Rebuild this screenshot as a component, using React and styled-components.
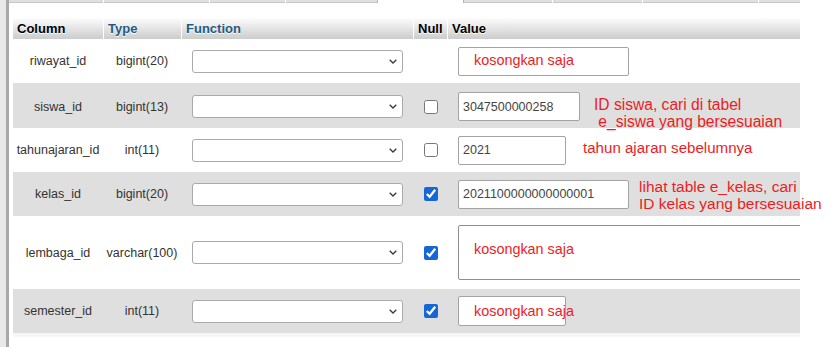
import React from "react";
import styled, { createGlobalStyle } from "styled-components";

const Global = createGlobalStyle`
  body {
    margin: 0;
    background: #fff;
    font-family: "Liberation Sans", Arial, sans-serif;
    color: #333;
  }
`;

const Page = styled.div`
  display: flex;
  height: 347px;
  overflow: hidden;
`;

const Rail = styled.div`
  width: 6px;
  flex: none;
  background: #e8e8e8;
  border-right: 3px solid #a8a8a8;
`;

const Main = styled.div`
  flex: 1;
  display: flex;
  flex-direction: column;
`;

const TabBar = styled.div`
  display: flex;
  gap: 1px;
  height: 3px;
  width: 791px;
`;

const Tab = styled.div`
  width: ${(p) => p.$w}px;
  flex: none;
  background: ${(p) => (p.$active ? "#fff" : "#e0e0e0")};
  box-shadow: ${(p) =>
    p.$active ? "-1px 0 0 #b5b5b5, 1px 0 0 #b5b5b5" : "inset 0 -1px 0 #c6c6c6"};
`;

const Table = styled.div`
  margin: 14px 0 0 4px;
  width: 787px;
`;

const cols = "90px 78px 232px 34px 353px";

const HeadRow = styled.div`
  display: grid;
  grid-template-columns: ${cols};
  height: 22px;
  background: linear-gradient(#fff, #ccc);
`;

const Th = styled.div`
  display: flex;
  align-items: center;
  padding-left: 4px;
  font-size: 13px;
  font-weight: bold;
  color: ${(p) => (p.$link ? "#235a81" : "#000")};
  text-shadow: 0 1px 0 #fff;
  border-left: ${(p) => (p.$first ? "none" : "1px solid #fff")};
`;

const Row = styled.div`
  display: grid;
  grid-template-columns: ${cols};
  height: ${(p) => p.$h}px;
  background: ${(p) => p.$bg || "#fff"};
`;

const Cell = styled.div`
  display: flex;
  align-items: center;
  justify-content: center;
  font-size: 12.5px;
  color: #333;
  white-space: nowrap;
`;

const ValueCell = styled.div`
  display: flex;
  align-items: center;
  padding-left: 11px;
  overflow: ${(p) => (p.$clip ? "hidden" : "visible")};
`;

const SelectWrap = styled.div`
  position: relative;
  width: 211px;
  height: 23px;
`;

const Select = styled.select`
  appearance: none;
  box-sizing: border-box;
  width: 100%;
  height: 100%;
  border: 1px solid #aaa;
  border-radius: 3px;
  background: #fff;
  font-family: inherit;
  font-size: 12.5px;
`;

const Chevron = styled.svg`
  position: absolute;
  right: 6px;
  top: 9px;
  pointer-events: none;
`;

const Check = styled.input.attrs({ type: "checkbox" })`
  width: 14px;
  height: 14px;
  margin: 0 0 0 1px;
  accent-color: #1666d6;
`;

const Field = styled.input.attrs({ readOnly: true })`
  box-sizing: border-box;
  width: ${(p) => p.$w}px;
  height: 29px;
  padding: 0 4px;
  border: 1px solid #a3a3a3;
  border-radius: 2px;
  font-family: inherit;
  font-size: 12.5px;
  color: #444;
  background: #fff;
  outline: none;
`;

const EmptyField = styled.div`
  box-sizing: border-box;
  flex: none;
  display: flex;
  width: ${(p) => p.$w}px;
  height: ${(p) => p.$h}px;
  align-items: ${(p) => (p.$top ? "flex-start" : "center")};
  padding: ${(p) => (p.$top ? 15 : 0)}px 0 ${(p) => p.$lift || 0}px 15px;
  border: 1px solid ${(p) => p.$border || "#a3a3a3"};
  border-radius: 2px;
  background: #fff;
  white-space: nowrap;
`;

const Red = styled.span`
  color: #ed1c24;
  font-size: ${(p) => p.$size || 14.4}px;
  line-height: ${(p) => p.$lh || 17}px;
  white-space: nowrap;
`;

const Note = styled.div`
  align-self: flex-start;
  margin-top: ${(p) => p.$top}px;
  margin-left: ${(p) => p.$gap}px;
  display: flex;
  flex-direction: column;
`;

const tabs = [94, 105, 75, 91, 85, 88, 89, 115, 41];

function FuncSelect() {
  return (
    <SelectWrap>
      <Select />
      <Chevron width="8" height="5" viewBox="0 0 8 5">
        <path d="M0.7 0.7 L4 4 L7.3 0.7" fill="none" stroke="#3a3a3a" strokeWidth="1.3" />
      </Chevron>
    </SelectWrap>
  );
}

function NullBox({ show, checked }) {
  return <Cell>{show && <Check defaultChecked={checked} />}</Cell>;
}

export default function App() {
  return (
    <Page>
      <Global />
      <Rail />
      <Main>
        <TabBar>
          {tabs.map((w, i) => (
            <Tab key={i} $w={w} $active={i === 4} />
          ))}
        </TabBar>
        <Table>
          <HeadRow>
            <Th $first>Column</Th>
            <Th $link>Type</Th>
            <Th $link>Function</Th>
            <Th>Null</Th>
            <Th>Value</Th>
          </HeadRow>

          <Row $h={44}>
            <Cell>riwayat_id</Cell>
            <Cell>bigint(20)</Cell>
            <Cell><FuncSelect /></Cell>
            <NullBox />
            <ValueCell>
              <EmptyField $w={171} $h={29} $lift={2}>
                <Red>kosongkan saja</Red>
              </EmptyField>
            </ValueCell>
          </Row>

          <Row $h={45} $bg="#dfdfdf">
            <Cell>siswa_id</Cell>
            <Cell>bigint(13)</Cell>
            <Cell><FuncSelect /></Cell>
            <NullBox show />
            <ValueCell>
              <Field $w={122} defaultValue="3047500000258" />
              <Note $top={14} $gap={14}>
                <Red $size={15.6} $lh={16.7}>ID siswa, cari di tabel</Red>
                <Red $size={15.6} $lh={16.7}>&nbsp;e_siswa yang bersesuaian</Red>
              </Note>
            </ValueCell>
          </Row>

          <Row $h={44}>
            <Cell>tahunajaran_id</Cell>
            <Cell>int(11)</Cell>
            <Cell><FuncSelect /></Cell>
            <NullBox show />
            <ValueCell>
              <Field $w={108} defaultValue="2021" />
              <Note $top={11} $gap={17}>
                <Red $size={15.1}>tahun ajaran sebelumnya</Red>
              </Note>
            </ValueCell>
          </Row>

          <Row $h={44} $bg="#dfdfdf">
            <Cell>kelas_id</Cell>
            <Cell>bigint(20)</Cell>
            <Cell><FuncSelect /></Cell>
            <NullBox show checked />
            <ValueCell>
              <Field $w={171} defaultValue="2021100000000000001" />
              <Note $top={6} $gap={10}>
                <Red $size={15.5} $lh={17.3}>lihat table e_kelas, cari</Red>
                <Red $size={15.5} $lh={17.3}>ID kelas yang bersesuaian</Red>
              </Note>
            </ValueCell>
          </Row>

          <Row $h={73}>
            <Cell>lembaga_id</Cell>
            <Cell>varchar(100)</Cell>
            <Cell><FuncSelect /></Cell>
            <NullBox show checked />
            <ValueCell $clip>
              <EmptyField $w={360} $h={55} $top $border="#8e8e9c">
                <Red>kosongkan saja</Red>
              </EmptyField>
            </ValueCell>
          </Row>

          <Row $h={44} $bg="#dfdfdf">
            <Cell>semester_id</Cell>
            <Cell>int(11)</Cell>
            <Cell><FuncSelect /></Cell>
            <NullBox show checked />
            <ValueCell>
              <EmptyField $w={108} $h={30}>
                <Red>kosongkan saja</Red>
              </EmptyField>
            </ValueCell>
          </Row>

          <Row $h={4} $bg="#f6f6f6" />
        </Table>
      </Main>
    </Page>
  );
}
